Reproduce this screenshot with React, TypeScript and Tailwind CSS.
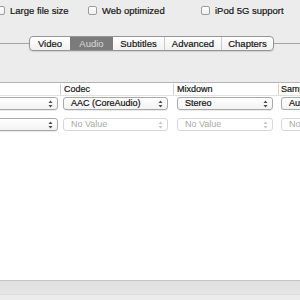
import React from "react";

const font = { fontFamily: '"Liberation Sans", Arial, sans-serif' };

function Arrows({ light = false }: { light?: boolean }) {
  const c = light ? "#c4c4c4" : "#4a4a4a";
  return (
    <svg width="5" height="8" viewBox="0 0 5 8" className="shrink-0">
      <path d="M2.5 0.5 L4.5 3 L0.5 3 Z" fill={c} />
      <path d="M2.5 7.5 L4.5 5 L0.5 5 Z" fill={c} />
    </svg>
  );
}

function Popup({
  text,
  width,
  disabled = false,
}: {
  text?: string;
  width: string;
  disabled?: boolean;
}) {
  return (
    <div
      className={`${width} h-[13px] shrink-0 flex items-center justify-between pl-[7px] pr-[4px] rounded-[3px] border ${
        disabled
          ? "border-[#d6d6d6] bg-white text-[#a9a9a9]"
          : "border-[#a9a9a9] bg-gradient-to-b from-white to-[#f3f3f3] text-[#111] shadow-[0_1px_0_rgba(0,0,0,0.08)] [-webkit-text-stroke:0.2px]"
      } text-[9px] leading-none overflow-hidden whitespace-nowrap`}
    >
      <span>{text ?? ""}</span>
      <Arrows light={disabled} />
    </div>
  );
}

function Check({ label, w, ml = "" }: { label: string; w: string; ml?: string }) {
  return (
    <div className={`${w} ${ml} shrink-0 flex items-center gap-[5px]`}>
      <div className="w-[9px] h-[9px] rounded-[2px] border border-[#9c9c9c] bg-gradient-to-b from-white to-[#efefef] shrink-0" />
      <span className="text-[9.5px] leading-none text-[#151515] whitespace-nowrap [-webkit-text-stroke:0.2px]">{label}</span>
    </div>
  );
}

export default function App() {
  const tabs = [
    { name: "Video", w: "w-[40px]" },
    { name: "Audio", w: "w-[43px]", active: true },
    { name: "Subtitles", w: "w-[51px]" },
    { name: "Advanced", w: "w-[57px]" },
    { name: "Chapters", w: "w-[52px]" },
  ];
  return (
    <div
      className="w-[300px] h-[300px] bg-[#ececec] overflow-hidden flex flex-col"
      style={font}
    >
      {/* checkbox row */}
      <div className="h-[21px] pt-[6px] flex items-start shrink-0">
        <Check label="Large file size" w="w-[92px]" ml="ml-[-4px]" />
        <Check label="Web optimized" w="w-[113px]" />
        <Check label="iPod 5G support" w="w-[100px]" />
      </div>

      {/* tabs */}
      <div className="mt-[15px] h-[15px] flex items-center shrink-0">
        <div className="w-[29px] h-px bg-[#a4a4a4] shrink-0" />
        <div className="flex h-[15px] rounded-[4px] border border-[#959595] bg-gradient-to-b from-white to-[#f1f1f1] overflow-hidden shadow-[0_1px_1px_rgba(0,0,0,0.12)] shrink-0">
          {tabs.map((t, i) => (
            <div
              key={t.name}
              className={`${t.w} h-full flex items-center justify-center text-[9.5px] leading-none ${
                t.active
                  ? "bg-[#7b7b7b] text-[#dcdcdc]"
                  : "text-[#151515] [-webkit-text-stroke:0.2px]"
              } ${i > 0 && !t.active && !tabs[i - 1].active ? "border-l border-[#c9c9c9]" : ""}`}
            >
              {t.name}
            </div>
          ))}
        </div>
        <div className="flex-1 h-px bg-[#a4a4a4]" />
      </div>

      <div className="h-[31px] shrink-0" />

      {/* table */}
      <div className="flex-1 flex flex-col bg-white border-t border-[#b4b4b4]">
        <div className="h-[13px] flex items-center border-b border-[#e2e2e2] text-[9px] leading-none text-[#151515] shrink-0 [-webkit-text-stroke:0.2px]">
          <div className="w-[60px] shrink-0" />
          <div className="w-[113px] shrink-0 h-[11px] border-l border-[#cfcfcf] pl-[3px] flex items-center">Codec</div>
          <div className="w-[105px] shrink-0 h-[11px] border-l border-[#cfcfcf] pl-[3px] flex items-center">Mixdown</div>
          <div className="flex-1 h-[11px] border-l border-[#cfcfcf] pl-[2px] flex items-center whitespace-nowrap overflow-hidden">Samplerate</div>
        </div>
        <div className="pt-[1px] flex flex-col gap-[8px]">
          <div className="flex h-[13px]">
            <div className="w-[60px] shrink-0 flex justify-end pr-[2px]">
              <Popup width="w-[90px]" />
            </div>
            <div className="w-[113px] shrink-0 pl-[3px]">
              <Popup text="AAC (CoreAudio)" width="w-[105px]" />
            </div>
            <div className="w-[105px] shrink-0 pl-[4px]">
              <Popup text="Stereo" width="w-[96px]" />
            </div>
            <div className="flex-1 pl-[3px] overflow-hidden">
              <Popup text="Auto" width="w-[60px]" />
            </div>
          </div>
          <div className="flex h-[13px]">
            <div className="w-[60px] shrink-0 flex justify-end pr-[2px]">
              <Popup width="w-[90px]" />
            </div>
            <div className="w-[113px] shrink-0 pl-[3px]">
              <Popup text="No Value" width="w-[105px]" disabled />
            </div>
            <div className="w-[105px] shrink-0 pl-[4px]">
              <Popup text="No Value" width="w-[96px]" disabled />
            </div>
            <div className="flex-1 pl-[3px] overflow-hidden">
              <Popup text="No Value" width="w-[60px]" disabled />
            </div>
          </div>
        </div>
      </div>

      {/* bottom bar */}
      <div className="h-[20px] shrink-0 flex flex-col border-t border-[#c4c4c4]">
        <div className="h-[13px] bg-gradient-to-b from-[#e0e0e0] to-[#e5e5e5]" />
        <div className="h-px bg-[#dadada]" />
        <div className="flex-1 bg-[#ececec]" />
      </div>
    </div>
  );
}
